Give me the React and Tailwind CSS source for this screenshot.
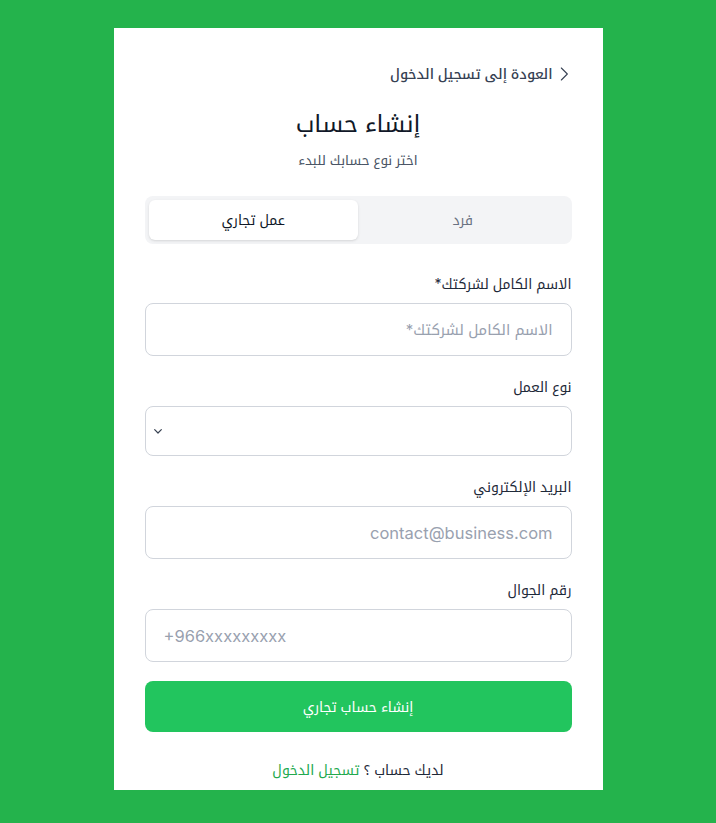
import React from "react";

function Field({ label, placeholder, ltr, size, className = "" }) {
  return (
    <div className={className}>
      <label className="block text-sm leading-5 text-gray-800 mb-[9px]">{label}</label>
      <input
        dir={ltr ? "ltr" : "rtl"}
        placeholder={placeholder}
        className={`block w-full h-[53px] rounded-lg border border-gray-300 bg-white px-[18px] text-gray-900 placeholder:text-gray-400 outline-none ${size}`}
      />
    </div>
  );
}

export default function App() {
  return (
    <div
      dir="rtl"
      className="min-h-[823px] bg-[#24b34c] pt-[28px] pb-[33px] font-['Inter','Noto_Kufi_Arabic',sans-serif]"
    >
      <div className="mx-auto w-[489px] h-[762px] bg-white px-[31px] pt-9">
        <a className="flex items-center gap-[3px] text-sm leading-5 font-medium text-gray-700 pr-0">
          <svg width="16" height="16" viewBox="0 0 24 24" fill="none" stroke="currentColor" strokeWidth="1.6" strokeLinecap="round" strokeLinejoin="round">
            <path d="M8 3l9 9-9 9" />
          </svg>
          <span>العودة إلى تسجيل الدخول</span>
        </a>

        <h1 className="mt-6 text-center text-2xl leading-8 text-gray-900">إنشاء حساب</h1>
        <p className="mt-2.5 text-center text-[13.5px] leading-5 text-gray-600">اختر نوع حسابك للبدء</p>

        <div className="mt-[26px] flex rounded-lg bg-gray-100 p-1 h-12">
          <button className="flex-1 rounded-md text-sm text-gray-500">فرد</button>
          <button className="flex-1 rounded-md bg-white text-sm text-gray-900 shadow-sm">عمل تجاري</button>
        </div>

        <Field className="mt-[30px]" size="text-[15px]" label="الاسم الكامل لشركتك*" placeholder="الاسم الكامل لشركتك*" />

        <div className="mt-[21px]">
          <label className="block text-sm leading-5 text-gray-800 mb-[9px]">نوع العمل</label>
          <div className="flex h-[50px] items-center justify-end rounded-lg border border-gray-300 bg-white px-[4px]">
            <svg width="16" height="16" viewBox="0 0 24 24" fill="none" stroke="#374151" strokeWidth="1.8" strokeLinecap="round" strokeLinejoin="round">
              <path d="M7 10l5 5 5-5" />
            </svg>
          </div>
        </div>

        <Field className="mt-[21px]" size="text-[16.5px]" label="البريد الإلكتروني" placeholder="contact@business.com" />
        <Field className="mt-[21px]" size="text-[16.5px]" label="رقم الجوال" placeholder="+966xxxxxxxxx" ltr />

        <button className="mt-[19px] flex h-[51px] w-full items-center justify-center rounded-lg bg-[#22c55e] text-sm text-white">
          إنشاء حساب تجاري
        </button>

        <p className="mt-[28px] text-center text-sm leading-5 text-gray-800">
          لديك حساب ؟ <a className="text-[#22a94e]">تسجيل الدخول</a>
        </p>
      </div>
    </div>
  );
}
